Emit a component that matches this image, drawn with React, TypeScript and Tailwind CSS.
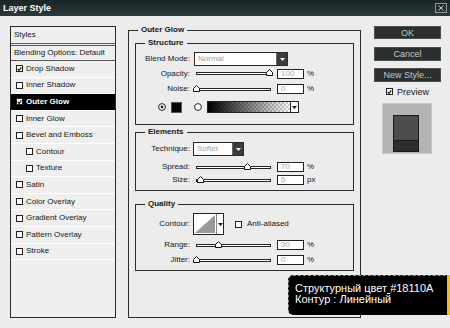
import type { ReactNode } from 'react'

const STYLE_ROWS: { label: string; checked?: boolean; indent?: boolean; selected?: boolean }[] = [
  { label: 'Drop Shadow', checked: true },
  { label: 'Inner Shadow' },
  { label: 'Outer Glow', checked: true, selected: true },
  { label: 'Inner Glow' },
  { label: 'Bevel and Emboss' },
  { label: 'Contour', indent: true },
  { label: 'Texture', indent: true },
  { label: 'Satin' },
  { label: 'Color Overlay' },
  { label: 'Gradient Overlay' },
  { label: 'Pattern Overlay' },
  { label: 'Stroke' },
]

function CheckBox({ checked }: { checked?: boolean }) {
  return (
    <span className="flex h-[7px] w-[7px] shrink-0 items-center justify-center border border-[#222] bg-white">
      {checked && (
        <svg width="6" height="6" viewBox="0 0 6 6" fill="none">
          <path d="M0.8 3 L2.4 4.6 L5.2 1" stroke="#111" strokeWidth="1.3" />
        </svg>
      )}
    </span>
  )
}

function Radio({ checked }: { checked?: boolean }) {
  return (
    <svg width="8" height="8" viewBox="0 0 8 8" className="shrink-0">
      <circle cx="4" cy="4" r="3.4" fill="#fff" stroke="#222" strokeWidth="1" />
      {checked && <circle cx="4" cy="4" r="1.4" fill="#222" />}
    </svg>
  )
}

function Arrow({ color = '#fff' }: { color?: string }) {
  return (
    <svg width="5" height="3" viewBox="0 0 5 3">
      <path d="M0 0 H5 L2.5 3 Z" fill={color} />
    </svg>
  )
}

function Dropdown({ value, className }: { value: string; className: string }) {
  return (
    <div className={`flex h-[14px] border border-[#2a2a2a] bg-white ${className}`}>
      <span className="flex-1 pl-[3px] leading-[12px] text-[#a0a0a0]">{value}</span>
      <span className="flex w-[11px] items-center justify-center border-l border-[#666] bg-[#3a3d3d]">
        <Arrow />
      </span>
    </div>
  )
}

function Slider({ pct }: { pct: number }) {
  return (
    <div className="relative ml-[6px] h-[3px] w-[75px] border border-[#222] bg-white">
      <svg
        width="7"
        height="7"
        viewBox="0 0 7 7"
        className="absolute top-[-4px]"
        style={{ left: `calc(${pct}% - 4px)` }}
      >
        <path d="M3.5 0.5 L6.5 3.5 V6.5 H0.5 V3.5 Z" fill="#fff" stroke="#111" strokeWidth="1" />
      </svg>
    </div>
  )
}

function SliderRow({ label, pct, value, unit, className }: { label: string; pct: number; value: string; unit: string; className: string }) {
  return (
    <div className={`flex items-center ${className}`}>
      <span className="w-[54px] text-right">{label}</span>
      <Slider pct={pct} />
      <span className="ml-[6px] h-[10px] w-[27px] border border-[#222] bg-white pl-[3px] leading-[8px] text-[#a8a8a8]">
        {value}
      </span>
      <span className="ml-[3px]">{unit}</span>
    </div>
  )
}

function Group({ title, className, children }: { title: string; className: string; children: ReactNode }) {
  return (
    <fieldset className={`border border-[#2c2c2c] ${className}`}>
      <legend className="ml-[9px] px-[3px] font-bold leading-[10px]">{title}</legend>
      {children}
    </fieldset>
  )
}

function StylesList() {
  return (
    <div className="ml-[10px] flex h-[292px] w-[106px] flex-col border border-[#2a2a2a] bg-[#efefef]">
      <div className="flex h-[17px] items-center border-b border-[#5a5a5a] pl-[3px]">Styles</div>
      <div className="mt-[1px] flex h-[16px] items-center border-y border-[#5a5a5a] pl-[3px]">
        Blending Options: Default
      </div>
      {STYLE_ROWS.map((r) => (
        <div
          key={r.label}
          className={`flex h-[16.6px] items-center gap-[3px] border-b border-white ${r.indent ? 'pl-[15px]' : 'pl-[5px]'} ${
            r.selected ? 'bg-black font-bold text-white' : ''
          }`}
        >
          <CheckBox checked={r.checked} />
          <span>{r.label}</span>
        </div>
      ))}
    </div>
  )
}

function OuterGlow() {
  return (
    <Group title="Outer Glow" className="ml-[12px] mt-[-1px] h-[293px] w-[233px]">
      <Group title="Structure" className="mx-[6px] mt-[3px] pb-[9px]">
        <div className="mt-[4px] flex h-[14px] items-center">
          <span className="w-[54px] text-right">Blend Mode:</span>
          <Dropdown value="Normal" className="ml-[4px] w-[94px]" />
        </div>
        <SliderRow label="Opacity:" pct={100} value="100" unit="%" className="h-[15px]" />
        <SliderRow label="Noise:" pct={0} value="0" unit="%" className="h-[16px]" />
        <div className="mt-[2px] flex h-[16px] items-center pl-[22px]">
          <Radio checked />
          <span className="ml-[5px] h-[11px] w-[11px] border border-[#555] bg-[#0a0505]" />
          <span className="ml-[12px]">
            <Radio />
          </span>
          <span className="ml-[5px] flex h-[12px] border border-[#222]">
            <span className="w-[82px] bg-[linear-gradient(to_right,#000,rgba(0,0,0,0)),repeating-conic-gradient(#cfcfcf_0%_25%,#fff_0%_50%)] bg-[length:100%_100%,4px_4px]" />
            <span className="flex w-[8px] items-center justify-center border-l border-[#222] bg-white">
              <Arrow color="#111" />
            </span>
          </span>
        </div>
      </Group>

      <Group title="Elements" className="mx-[6px] mt-[2px] pb-[4px]">
        <div className="mt-[5px] flex h-[14px] items-center">
          <span className="w-[54px] text-right">Technique:</span>
          <Dropdown value="Softer" className="ml-[3px] w-[51px]" />
        </div>
        <SliderRow label="Spread:" pct={70} value="70" unit="%" className="mt-[5px] h-[12px]" />
        <SliderRow label="Size:" pct={5} value="6" unit="px" className="mt-[1px] h-[12px]" />
      </Group>

      <Group title="Quality" className="mx-[6px] mt-[8px] pb-[4px]">
        <div className="mt-[4px] flex h-[22px] items-center">
          <span className="w-[54px] text-right">Contour:</span>
          <span className="ml-[3px] flex h-[22px] w-[31px] border border-[#222] bg-white">
            <svg width="22" height="20" viewBox="0 0 22 20" className="shrink-0">
              <path d="M1 19 L21 1 V19 Z" fill="#9a9a9a" />
            </svg>
            <span className="flex flex-1 items-center justify-center border-l border-[#888]">
              <Arrow color="#111" />
            </span>
          </span>
          <span className="ml-[11px]">
            <CheckBox />
          </span>
          <span className="ml-[5px]">Anti-aliased</span>
        </div>
        <SliderRow label="Range:" pct={30} value="30" unit="%" className="mt-[4px] h-[12px]" />
        <SliderRow label="Jitter:" pct={0} value="0" unit="%" className="mt-[3px] h-[12px]" />
      </Group>
    </Group>
  )
}

function Button({ children, className }: { children: ReactNode; className: string }) {
  return (
    <div
      className={`flex w-[67px] items-center justify-center border border-[#4a4f4f] bg-[#2b2f2f] text-[9px] text-[#c4c8c8] ${className}`}
    >
      {children}
    </div>
  )
}

function SidePanel() {
  return (
    <div className="ml-[13px] flex flex-col">
      <Button className="h-[13px]">OK</Button>
      <Button className="mt-[8px] h-[14px]">Cancel</Button>
      <Button className="mt-[7px] h-[14px]">New Style...</Button>
      <div className="mt-[4px] flex h-[11px] items-center gap-[4px] pl-[12px] text-[9px]">
        <CheckBox checked />
        <span>Preview</span>
      </div>
      <div className="ml-[8px] mt-[6px] h-[51px] w-[50px] border border-[#c8c8c8] bg-[#b4b4b4] pl-[10px] pt-[11px]">
        <div className="flex h-[37px] w-[26px] flex-col border border-[#1a1a1a]">
          <div className="h-[24px] bg-[#4d4d4d]" />
          <div className="flex-1 border-t border-[#1a1a1a] bg-[#2e2e2e]" />
        </div>
      </div>
    </div>
  )
}

export default function App() {
  return (
    <div className="relative h-[328px] w-[450px] overflow-hidden bg-[#ececec] font-['Liberation_Sans',Arial,sans-serif] text-[8px] leading-[10px] text-[#151515]">
      <div className="flex h-[16px] items-center justify-between bg-[linear-gradient(#1b2528,#2c393c)] pl-[3px] pr-[3px]">
        <span className="text-[9px] font-bold text-white">Layer Style</span>
        <span className="flex h-[10px] w-[12px] items-center justify-center border border-[#8f9a9c]">
          <svg width="6" height="6" viewBox="0 0 6 6">
            <path d="M0.5 0.5 L5.5 5.5 M5.5 0.5 L0.5 5.5" stroke="#c9d0d0" strokeWidth="1" />
          </svg>
        </span>
      </div>

      <div className="flex pt-[10px]">
        <StylesList />
        <OuterGlow />
        <SidePanel />
      </div>

      {/* annotation overlay, bottom right */}
      <div className="absolute left-[288px] top-[275px] h-[40px] w-[162px] rounded-l-[5px] border-l border-t border-dashed border-[#8a8a8a] bg-black pl-[6px] pt-[7px] text-[11px] leading-[11px] text-white">
        <div>
          Структурный цвет<span className="underline"> </span>#18110A
        </div>
        <div>Контур : Линейный</div>
      </div>
      <div className="absolute right-0 top-[275px] h-[40px] w-[3px] bg-[#f2c200]" />
    </div>
  )
}
